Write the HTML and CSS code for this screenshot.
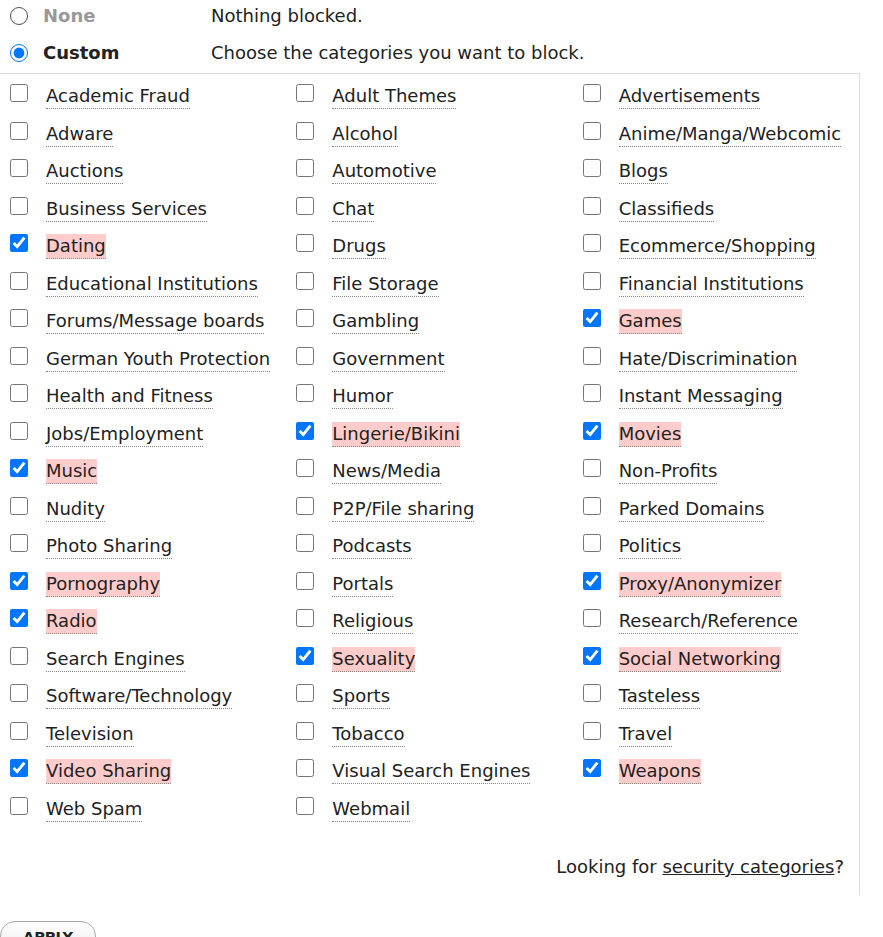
FILE: index.html
```html
<!DOCTYPE html>
<html>
<head>
<meta charset="utf-8">
<link rel="stylesheet" href="styles.css">
</head>
<body>
<div class="modes">
  <label class="mode">
    <input type="radio" name="mode" class="radio">
    <span class="mode-name muted">None</span>
    <span class="mode-desc">Nothing blocked.</span>
  </label>
  <label class="mode">
    <input type="radio" name="mode" class="radio" checked>
    <span class="mode-name">Custom</span>
    <span class="mode-desc">Choose the categories you want to block.</span>
  </label>
</div>
<div class="panel">
  <div class="grid">
    <label class="cat"><input type="checkbox" class="cb"><span class="name">Academic Fraud</span></label>
    <label class="cat"><input type="checkbox" class="cb"><span class="name">Adult Themes</span></label>
    <label class="cat"><input type="checkbox" class="cb"><span class="name">Advertisements</span></label>
    <label class="cat"><input type="checkbox" class="cb"><span class="name">Adware</span></label>
    <label class="cat"><input type="checkbox" class="cb"><span class="name">Alcohol</span></label>
    <label class="cat"><input type="checkbox" class="cb"><span class="name">Anime/Manga/Webcomic</span></label>
    <label class="cat"><input type="checkbox" class="cb"><span class="name">Auctions</span></label>
    <label class="cat"><input type="checkbox" class="cb"><span class="name">Automotive</span></label>
    <label class="cat"><input type="checkbox" class="cb"><span class="name">Blogs</span></label>
    <label class="cat"><input type="checkbox" class="cb"><span class="name">Business Services</span></label>
    <label class="cat"><input type="checkbox" class="cb"><span class="name">Chat</span></label>
    <label class="cat"><input type="checkbox" class="cb"><span class="name">Classifieds</span></label>
    <label class="cat"><input type="checkbox" class="cb" checked><span class="name on">Dating</span></label>
    <label class="cat"><input type="checkbox" class="cb"><span class="name">Drugs</span></label>
    <label class="cat"><input type="checkbox" class="cb"><span class="name">Ecommerce/Shopping</span></label>
    <label class="cat"><input type="checkbox" class="cb"><span class="name">Educational Institutions</span></label>
    <label class="cat"><input type="checkbox" class="cb"><span class="name">File Storage</span></label>
    <label class="cat"><input type="checkbox" class="cb"><span class="name">Financial Institutions</span></label>
    <label class="cat"><input type="checkbox" class="cb"><span class="name">Forums/Message boards</span></label>
    <label class="cat"><input type="checkbox" class="cb"><span class="name">Gambling</span></label>
    <label class="cat"><input type="checkbox" class="cb" checked><span class="name on">Games</span></label>
    <label class="cat"><input type="checkbox" class="cb"><span class="name">German Youth Protection</span></label>
    <label class="cat"><input type="checkbox" class="cb"><span class="name">Government</span></label>
    <label class="cat"><input type="checkbox" class="cb"><span class="name">Hate/Discrimination</span></label>
    <label class="cat"><input type="checkbox" class="cb"><span class="name">Health and Fitness</span></label>
    <label class="cat"><input type="checkbox" class="cb"><span class="name">Humor</span></label>
    <label class="cat"><input type="checkbox" class="cb"><span class="name">Instant Messaging</span></label>
    <label class="cat"><input type="checkbox" class="cb"><span class="name">Jobs/Employment</span></label>
    <label class="cat"><input type="checkbox" class="cb" checked><span class="name on">Lingerie/Bikini</span></label>
    <label class="cat"><input type="checkbox" class="cb" checked><span class="name on">Movies</span></label>
    <label class="cat"><input type="checkbox" class="cb" checked><span class="name on">Music</span></label>
    <label class="cat"><input type="checkbox" class="cb"><span class="name">News/Media</span></label>
    <label class="cat"><input type="checkbox" class="cb"><span class="name">Non-Profits</span></label>
    <label class="cat"><input type="checkbox" class="cb"><span class="name">Nudity</span></label>
    <label class="cat"><input type="checkbox" class="cb"><span class="name">P2P/File sharing</span></label>
    <label class="cat"><input type="checkbox" class="cb"><span class="name">Parked Domains</span></label>
    <label class="cat"><input type="checkbox" class="cb"><span class="name">Photo Sharing</span></label>
    <label class="cat"><input type="checkbox" class="cb"><span class="name">Podcasts</span></label>
    <label class="cat"><input type="checkbox" class="cb"><span class="name">Politics</span></label>
    <label class="cat"><input type="checkbox" class="cb" checked><span class="name on">Pornography</span></label>
    <label class="cat"><input type="checkbox" class="cb"><span class="name">Portals</span></label>
    <label class="cat"><input type="checkbox" class="cb" checked><span class="name on">Proxy/Anonymizer</span></label>
    <label class="cat"><input type="checkbox" class="cb" checked><span class="name on">Radio</span></label>
    <label class="cat"><input type="checkbox" class="cb"><span class="name">Religious</span></label>
    <label class="cat"><input type="checkbox" class="cb"><span class="name">Research/Reference</span></label>
    <label class="cat"><input type="checkbox" class="cb"><span class="name">Search Engines</span></label>
    <label class="cat"><input type="checkbox" class="cb" checked><span class="name on">Sexuality</span></label>
    <label class="cat"><input type="checkbox" class="cb" checked><span class="name on">Social Networking</span></label>
    <label class="cat"><input type="checkbox" class="cb"><span class="name">Software/Technology</span></label>
    <label class="cat"><input type="checkbox" class="cb"><span class="name">Sports</span></label>
    <label class="cat"><input type="checkbox" class="cb"><span class="name">Tasteless</span></label>
    <label class="cat"><input type="checkbox" class="cb"><span class="name">Television</span></label>
    <label class="cat"><input type="checkbox" class="cb"><span class="name">Tobacco</span></label>
    <label class="cat"><input type="checkbox" class="cb"><span class="name">Travel</span></label>
    <label class="cat"><input type="checkbox" class="cb" checked><span class="name on">Video Sharing</span></label>
    <label class="cat"><input type="checkbox" class="cb"><span class="name">Visual Search Engines</span></label>
    <label class="cat"><input type="checkbox" class="cb" checked><span class="name on">Weapons</span></label>
    <label class="cat"><input type="checkbox" class="cb"><span class="name">Web Spam</span></label>
    <label class="cat"><input type="checkbox" class="cb"><span class="name">Webmail</span></label>
  </div>
  <p class="hint">Looking for <a href="#" class="link">security categories</a>?</p>
</div>
<button class="apply">APPLY</button>
</body>
</html>
```
FILE: styles.css
```css
html, body {
  margin: 0;
  padding: 0;
  background: #fff;
}
body {
  font-family: "DejaVu Sans", Verdana, sans-serif;
  font-size: 18px;
  color: #222;
}
.modes {
  display: flex;
  flex-direction: column;
}
.mode {
  display: flex;
  align-items: center;
  height: 24px;
  line-height: 24px;
  padding: 4px 0 8.5px 10px;
}
.radio {
  width: 18px;
  height: 18px;
  margin: 0 15px 0 0;
  accent-color: #0075ff;
}
.mode-name {
  width: 168px;
  font-weight: bold;
  color: #222;
}
.mode-name.muted {
  color: #999;
}
.panel {
  width: 860px;
  box-sizing: border-box;
  border-top: 1px solid #ddd;
  border-right: 1px solid #ddd;
  padding: 4px 0 16px 0;
}
.grid {
  display: grid;
  grid-template-columns: repeat(3, 1fr);
  grid-auto-rows: 37.5px;
}
.cat {
  display: flex;
  align-items: flex-start;
  padding: 6px 0 0 10px;
  white-space: nowrap;
}
.cb {
  width: 18px;
  height: 18px;
  margin: 0 18px 0 0;
  flex: none;
}
.name {
  display: inline-block;
  line-height: 24px;
  border-bottom: 1px dotted #888;
}
.name.on {
  background: #fcc;
}
.hint {
  margin: 27px 0 0 0;
  padding-right: 15px;
  text-align: right;
  line-height: 24px;
}
.link {
  color: #222;
  text-decoration: underline;
}
.apply {
  margin-top: 26px;
  margin-left: 0;
  padding: 7px 22px 6px 22px;
  border: 1px solid #aaa;
  border-radius: 15px;
  background: linear-gradient(#fff, #ececec);
  font-family: "DejaVu Sans", Verdana, sans-serif;
  font-weight: bold;
  font-size: 14.5px;
  color: #222;
}
```
